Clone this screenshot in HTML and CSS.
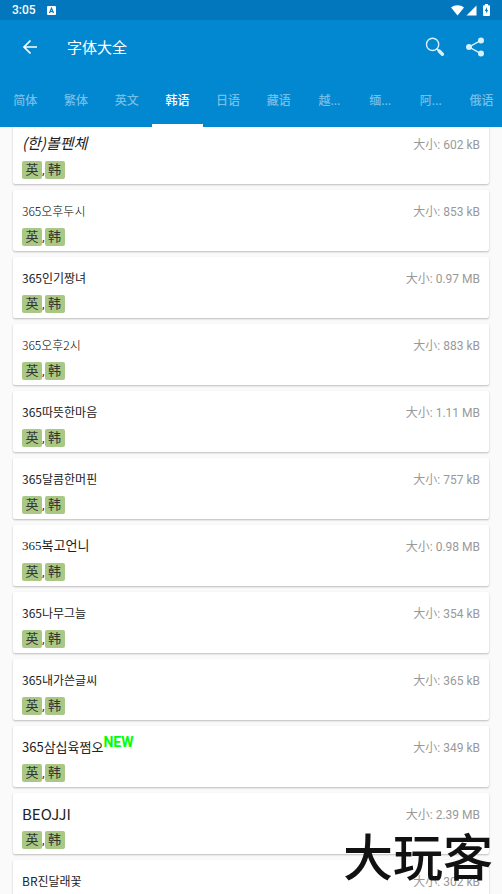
FILE: index.html
```html
<!DOCTYPE html>
<html lang="zh-CN">
<head>
    <meta charset="UTF-8">
    <meta name="viewport" content="width=device-width, initial-scale=1.0">
    <title>字体大全</title>
    <link rel="stylesheet" href="styles.css">
</head>
<body>
<div class="screen">
    <header class="header">
        <!-- status bar -->
        <div class="status-bar">
            <span class="clock">3:05</span>
            <svg class="status-app" width="9" height="9" viewBox="0 0 9 9">
                <rect width="9" height="9" rx="1" fill="#fff"/>
                <path d="M2.5 7 L4.5 2.3 L6.5 7 M3.2 5.5 H5.8" fill="none" stroke="#0277bd" stroke-width="1.2"/>
            </svg>
            <div class="status-icons">
                <svg width="13" height="11" viewBox="0 0 13 11"><path d="M0 2.6 C3.8 -0.6 9.2 -0.6 13 2.6 L6.5 10.6 Z" fill="#fff"/></svg>
                <svg width="11" height="11" viewBox="0 0 11 11"><path d="M10.5 0.5 V10.5 H0.5 Z" fill="#fff"/></svg>
                <svg class="battery" width="7" height="12" viewBox="0 0 7 12">
                    <path d="M2 0 H5 V1.2 H6 Q7 1.2 7 2.2 V11 Q7 12 6 12 H1 Q0 12 0 11 V2.2 Q0 1.2 1 1.2 H2 Z" fill="#fff"/>
                    <path d="M4 3 L1.8 7 H3.1 V9.6 L5.2 6 H4 Z" fill="#0277bd"/>
                </svg>
            </div>
        </div>

        <div class="app-bar">
            <button class="icon-button" aria-label="返回">
                <svg width="16" height="16" viewBox="0 0 16 16"><path d="M15 8 H2.5 M8.5 1.5 L2 8 L8.5 14.5" fill="none" stroke="#fff" stroke-width="1.7"/></svg>
            </button>
            <h1 class="title">字体大全</h1>
            <button class="icon-button" aria-label="搜索">
                <svg width="20" height="20" viewBox="0 0 20 20" fill="none" stroke="#d9f0fb">
                    <circle cx="7.6" cy="7.4" r="6.1" stroke-width="1.4"/>
                    <path d="M11.8 11.6 L14 13.8" stroke-width="1.8"/>
                    <path d="M14.2 14 L17.4 17.2" stroke-width="3.4" stroke-linecap="round"/>
                </svg>
            </button>
            <button class="icon-button" aria-label="分享">
                <svg width="20" height="20" viewBox="0 0 20 20">
                    <path d="M16 3.4 L4 10 L16 16.6" fill="none" stroke="#d9f0fb" stroke-width="1.4"/>
                    <g fill="#d9f0fb"><circle cx="16" cy="3.4" r="3"/><circle cx="4" cy="10" r="3"/><circle cx="16" cy="16.6" r="3"/></g>
                </svg>
            </button>
        </div>

        <nav class="tabs">
            <a class="tab" href="#">简体</a>
            <a class="tab" href="#">繁体</a>
            <a class="tab" href="#">英文</a>
            <a class="tab active" href="#">韩语</a>
            <a class="tab" href="#">日语</a>
            <a class="tab" href="#">藏语</a>
            <a class="tab" href="#">越...</a>
            <a class="tab" href="#">缅...</a>
            <a class="tab" href="#">阿...</a>
            <a class="tab" href="#">俄语</a>
        </nav>
    </header>

    <!-- font list -->
    <main class="font-list">
        <div class="card">
            <div class="card-row"><span class="name pen">(한)볼펜체</span><span class="size">大小: 602 kB</span></div>
            <div class="langs"><span class="lang">英</span>,<span class="lang">韩</span></div>
        </div>
        <div class="card">
            <div class="card-row"><span class="name light">365오후두시</span><span class="size">大小: 853 kB</span></div>
            <div class="langs"><span class="lang">英</span>,<span class="lang">韩</span></div>
        </div>
        <div class="card">
            <div class="card-row"><span class="name">365인기짱녀</span><span class="size">大小: 0.97 MB</span></div>
            <div class="langs"><span class="lang">英</span>,<span class="lang">韩</span></div>
        </div>
        <div class="card">
            <div class="card-row"><span class="name light">365오후2시</span><span class="size">大小: 883 kB</span></div>
            <div class="langs"><span class="lang">英</span>,<span class="lang">韩</span></div>
        </div>
        <div class="card">
            <div class="card-row"><span class="name">365따뜻한마음</span><span class="size">大小: 1.11 MB</span></div>
            <div class="langs"><span class="lang">英</span>,<span class="lang">韩</span></div>
        </div>
        <div class="card">
            <div class="card-row"><span class="name">365달콤한머핀</span><span class="size">大小: 757 kB</span></div>
            <div class="langs"><span class="lang">英</span>,<span class="lang">韩</span></div>
        </div>
        <div class="card">
            <div class="card-row"><span class="name serif">365복고언니</span><span class="size">大小: 0.98 MB</span></div>
            <div class="langs"><span class="lang">英</span>,<span class="lang">韩</span></div>
        </div>
        <div class="card">
            <div class="card-row"><span class="name">365나무그늘</span><span class="size">大小: 354 kB</span></div>
            <div class="langs"><span class="lang">英</span>,<span class="lang">韩</span></div>
        </div>
        <div class="card">
            <div class="card-row"><span class="name">365내가쓴글씨</span><span class="size">大小: 365 kB</span></div>
            <div class="langs"><span class="lang">英</span>,<span class="lang">韩</span></div>
        </div>
        <div class="card">
            <div class="card-row"><span class="name wide">365삼십육쩜오</span><span class="new">NEW</span><span class="size">大小: 349 kB</span></div>
            <div class="langs"><span class="lang">英</span>,<span class="lang">韩</span></div>
        </div>
        <div class="card">
            <div class="card-row"><span class="name latin">BEOJJI</span><span class="size">大小: 2.39 MB</span></div>
            <div class="langs"><span class="lang">英</span>,<span class="lang">韩</span></div>
        </div>
        <div class="card">
            <div class="card-row"><span class="name">BR진달래꽃</span><span class="size">大小: 302 kB</span></div>
            <div class="langs"><span class="lang">英</span>,<span class="lang">韩</span></div>
        </div>
    </main>

    <div class="watermark">大玩客</div>
</div>
</body>
</html>
```

FILE: styles.css
```css
* {
    box-sizing: border-box;
}

body {
    font-family: Roboto, "Noto Sans CJK SC", sans-serif;
    margin: 0;
    background-color: #fafafa;
}

.screen {
    position: relative;
    height: 100vh;
    overflow: hidden;
}

.header {
    position: sticky;
    top: 0;
    z-index: 1;
    background-color: #0288d1;
    color: #fff;
}

.status-bar {
    display: flex;
    align-items: center;
    height: 20px;
    padding: 0 12px;
    background-color: #0277bd;
}

.clock {
    font-size: 12px;
    font-weight: 500;
}

.status-app {
    margin-left: 11px;
}

.status-icons {
    display: flex;
    align-items: center;
    gap: 2px;
    margin-left: auto;
}

.battery {
    margin-left: 4px;
}

.app-bar {
    display: flex;
    align-items: center;
    height: 53px;
    padding: 0 7px 0 10px;
}

.icon-button {
    display: flex;
    align-items: center;
    justify-content: center;
    width: 40px;
    height: 40px;
    padding: 0;
    border: none;
    background: none;
    cursor: pointer;
}

.title {
    flex: 1;
    margin: 0;
    padding-left: 17px;
    font-size: 15px;
    font-weight: 400;
}

.tabs {
    display: flex;
    height: 54px;
    overflow: hidden;
}

.tab {
    flex: 0 0 10.1%;
    border-bottom: 3px solid transparent;
    padding-top: 3px;
    color: #75bfe7;
    font-size: 12px;
    font-weight: 500;
    line-height: 50px;
    height: 54px;
    text-align: center;
    text-decoration: none;
}

.tab.active {
    border-bottom-color: #fff;
    color: #fff;
}

/* the list is scrolled a little under the header */
.font-list {
    display: flex;
    flex-direction: column;
    gap: 6px;
    margin-top: -4px;
    padding: 0 13px;
}

.card {
    padding: 11px 9px 5px;
    border-radius: 2px;
    background-color: #fff;
    box-shadow: 0 1px 2px rgba(0, 0, 0, 0.25);
}

.card-row {
    display: flex;
    height: 20px;
    margin-bottom: 7px;
}

.name {
    color: #222;
    font-family: "Noto Sans CJK KR", sans-serif;
    font-size: 12px;
    line-height: 20px;
}

.name.light {
    color: #000;
    font-weight: 300;
}

.name.wide {
    font-size: 13px;
}

.name.pen {
    font-size: 15px;
    font-style: italic;
    line-height: 18px;
}

.name.serif {
    font-family: "Liberation Serif", "Noto Sans CJK KR", serif;
    font-size: 13px;
}

.name.latin {
    font-size: 15px;
}

.new {
    color: #0f0;
    font-size: 14px;
    font-weight: 700;
    line-height: 10px;
}

.size {
    margin-left: auto;
    color: #999;
    font-size: 12px;
    line-height: 22px;
}

.langs {
    display: flex;
    height: 18px;
    color: #333;
    font-size: 13px;
    line-height: 18px;
}

.lang {
    width: 20px;
    border-radius: 2px;
    background-color: #aac885;
    text-align: center;
}

.watermark {
    position: absolute;
    right: 9px;
    bottom: 12px;
    z-index: 2;
    color: #111;
    font-family: "Noto Sans CJK SC", sans-serif;
    font-size: 50px;
    font-weight: 500;
    line-height: 56px;
}
```
